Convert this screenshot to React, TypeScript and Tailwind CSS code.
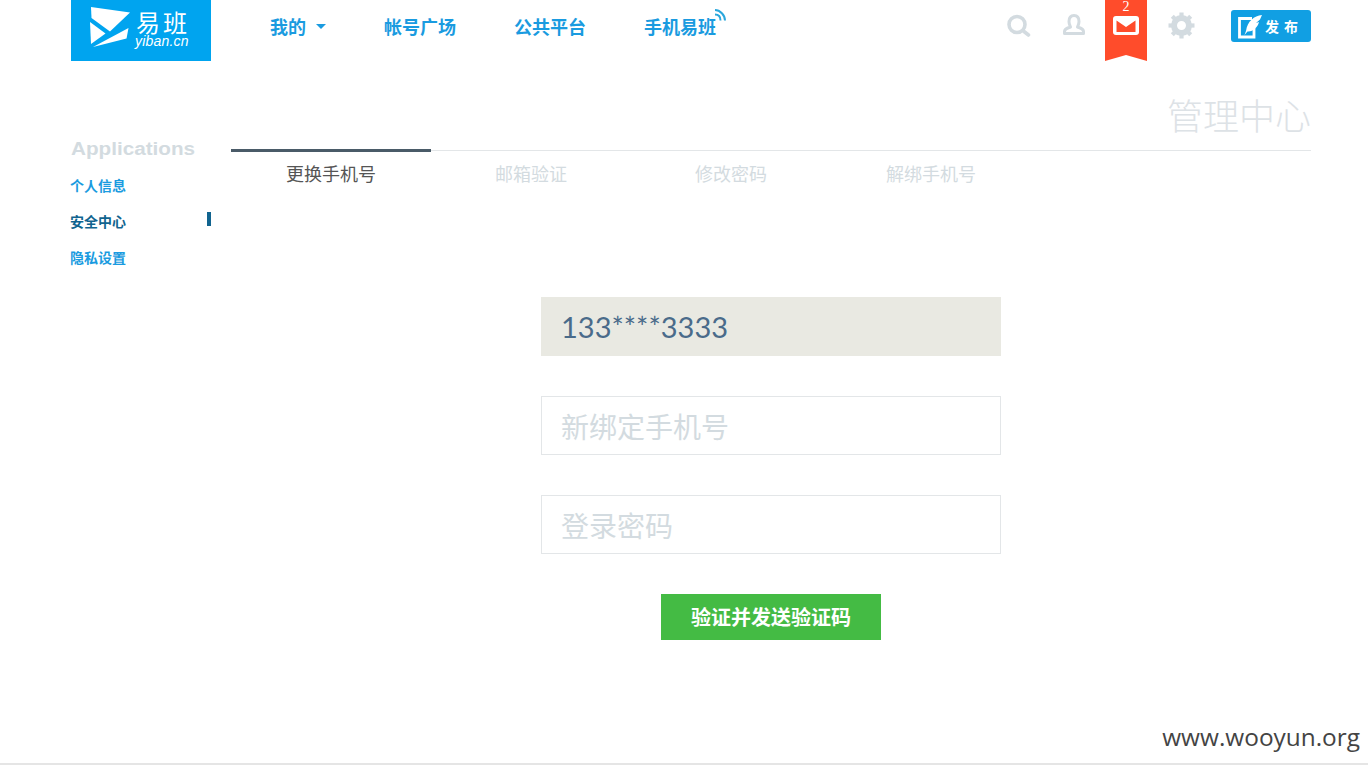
import React from "react";

const cjk = '"Noto Sans CJK SC", "Liberation Sans", sans-serif';

function Logo() {
  return (
    <div className="relative h-[61px] w-[140px] shrink-0 bg-[#00a4ef] text-white">
      <svg className="absolute left-0 top-0" width="64" height="61" viewBox="0 0 64 61" fill="#fff">
        <path d="M20 7 L59 12.5 L39 31.5 L20.5 18 Z" />
        <path d="M19 22 L34.5 33.5 L20 44 Z" />
        <path d="M22 47 L57.5 28 L55.5 38.5 Z" />
      </svg>
      <span className="absolute left-[65px] top-[10px] text-[24px] tracking-[3px] leading-[24px]" style={{ fontFamily: cjk }}>
        易班
      </span>
      <span className="absolute left-[64px] top-[34px] text-[14px] italic leading-[14px] tracking-[0.2px] font-['Liberation_Sans']">
        yiban.cn
      </span>
    </div>
  );
}

function Header() {
  return (
    <header className="flex h-[61px] items-start pl-[71px] pr-[57px]">
      <Logo />
      <nav className="ml-[59px] flex h-[52px] items-center gap-[58px] text-[18px] font-bold text-[#1a9be0]">
        <div className="flex items-center">
          <span>我的</span>
          <svg className="ml-[10px]" width="10" height="5" viewBox="0 0 10 5" fill="#1a9be0">
            <path d="M0 0 H10 L5 5 Z" />
          </svg>
        </div>
        <span>帐号广场</span>
        <span>公共平台</span>
        <div className="relative">
          <span>手机易班</span>
          <svg className="absolute -right-[10px] -top-[4px]" width="12" height="12" viewBox="0 0 12 12" fill="none" stroke="#2aa7dc" strokeWidth="2">
            <path d="M1 1 C6 1 11 6 11 11.5" />
            <path d="M1 5.5 C4.5 5.5 6.5 8 6.5 11.5" />
          </svg>
        </div>
      </nav>
      <div className="ml-auto flex items-start">
        <svg className="mt-[14px]" width="24" height="23" viewBox="0 0 24 23" fill="none" stroke="#d3dbe0">
          <circle cx="10" cy="10.5" r="8" strokeWidth="3.6" />
          <path d="M17 17.5 L21.5 21" strokeWidth="3.6" strokeLinecap="round" />
        </svg>
        <svg className="ml-[32px] mt-[14px]" width="22" height="21" viewBox="0 0 22 21" fill="none" stroke="#d3dbe0" strokeWidth="3">
          <path d="M11 1.5 C15 1.5 16 4.5 16 7.5 C16 10 15 11.5 14.5 13 C17 14 20.5 14.5 20.5 17.5 V19.5 H1.5 V17.5 C1.5 14.5 5 14 7.5 13 C7 11.5 6 10 6 7.5 C6 4.5 7 1.5 11 1.5 Z" strokeLinejoin="round" />
        </svg>
        <div className="relative ml-[20px] flex h-[61px] w-[42px] flex-col items-center bg-[#ff4c2b] text-white [clip-path:polygon(0_0,100%_0,100%_100%,50%_90%,0_100%)]">
          <span className="h-[16px] text-[14px] leading-[14px] font-['Liberation_Serif']">2</span>
          <svg width="26" height="19" viewBox="0 0 26 19">
            <rect x="0" y="0" width="26" height="19" rx="3" fill="#fff" />
            <path d="M3.5 4.5 L13 11 L22.5 4.5 V16 H3.5 Z" fill="#ff4c2b" />
          </svg>
        </div>
        <svg className="ml-[21px] mt-[12px]" width="27" height="27" viewBox="0 0 27 27" fill="none">
          <circle cx="13.5" cy="13.5" r="7.5" stroke="#d3dbe0" strokeWidth="6" />
          <g stroke="#d3dbe0" strokeWidth="4.2">
            <path d="M13.5 0.5 V5" />
            <path d="M13.5 22 V26.5" />
            <path d="M0.5 13.5 H5" />
            <path d="M22 13.5 H26.5" />
            <path d="M4.3 4.3 L7.5 7.5" />
            <path d="M19.5 19.5 L22.7 22.7" />
            <path d="M4.3 22.7 L7.5 19.5" />
            <path d="M19.5 7.5 L22.7 4.3" />
          </g>
        </svg>
        <div className="ml-[36px] mt-[10px] flex h-[32px] w-[80px] items-center rounded-[3px] bg-[#119fe3] pl-[7px] text-white">
          <svg width="24" height="26" viewBox="0 0 24 26" fill="none">
            <path d="M14 5.5 H1.5 V24 H16 V15" stroke="#fff" strokeWidth="2.8" />
            <path d="M24 2 C16 3 9.5 8 8 18 L6.5 22 L9.5 18.5 C15 19 20 14 21 9 L18 10 L22 6.5 Z" fill="#fff" />
          </svg>
          <span className="ml-[3px] text-[14px] font-bold tracking-[5px] leading-none" style={{ fontFamily: cjk }}>发布</span>
        </div>
      </div>
    </header>
  );
}

function Sidebar() {
  const items = [
    { t: "个人信息", c: "text-[#1a9be0]" },
    { t: "安全中心", c: "text-[#11648f]", active: true },
    { t: "隐私设置", c: "text-[#1a9be0]" },
  ];
  return (
    <aside className="w-[140px] shrink-0 pt-[76px]">
      <div className="h-[25px] origin-left scale-x-[1.148] text-[18px] font-bold leading-[25px] text-[#d3dbe0] font-['Liberation_Sans']">
        Applications
      </div>
      <ul className="mt-[5px] flex flex-col text-[14px] font-bold">
        {items.map((i) => (
          <li key={i.t} className={`relative flex h-[36px] items-center ${i.c}`}>
            <span className="-ml-[1px]">{i.t}</span>
            {i.active && <span className="absolute right-0 top-[9px] h-[14px] w-[4px] bg-[#11648f]" />}
          </li>
        ))}
      </ul>
    </aside>
  );
}

function Tabs() {
  const tabs = ["更换手机号", "邮箱验证", "修改密码", "解绑手机号"];
  return (
    <div className="flex border-t border-[#e3e6e8]">
      {tabs.map((t, i) => (
        <div
          key={t}
          className={`-mt-[2px] flex h-[48px] w-[200px] justify-center border-t-[3px] pt-[8px] text-[18px] leading-[26px] ${
            i === 0 ? "border-[#4a5b68] text-[#555]" : "border-transparent text-[#d3dbe0]"
          }`}
        >
          {t}
        </div>
      ))}
    </div>
  );
}

function Form() {
  const base =
    "block h-[59px] w-[460px] text-[28px] outline-none placeholder:text-[#d3dbe0]";
  return (
    <form className="mt-[100px] flex flex-col items-center gap-[40px]">
      <input
        readOnly
        value="133****3333"
        className={`${base} bg-[#e9e9e2] pl-[20px] pb-[1px] text-[29px] text-[#4a6b8a]`}
        style={{ fontFamily: "Lato, sans-serif" }}
      />
      <input placeholder="新绑定手机号" className={`${base} border border-[#e3e6e8] pl-[19px]`} />
      <input placeholder="登录密码" className={`${base} border border-[#e3e6e8] pl-[19px]`} />
      <button type="button" className="h-[46px] w-[220px] bg-[#44bb44] text-[20px] font-bold text-white">
        验证并发送验证码
      </button>
    </form>
  );
}

export default function App() {
  return (
    <div className="relative flex h-[767px] w-[1368px] flex-col overflow-hidden bg-white" style={{ fontFamily: cjk }}>
      <Header />
      <div className="flex flex-1 gap-[20px] pl-[71px] pr-[57px]">
        <Sidebar />
        <main className="flex-1">
          <h1 className="h-[89px] pt-[30px] text-right text-[36px] font-light leading-[46px] text-[#dde2e6]" style={{ fontFamily: '"Noto Sans CJK SC", sans-serif' }}>
            管理中心
          </h1>
          <Tabs />
          <Form />
        </main>
      </div>
      <div className="mb-[2px] h-[2px] bg-[#e5e5e5]" />
      <span className="absolute right-[8px] top-[720px] text-[24.4px] leading-[34px] text-[#444] font-['Open_Sans']">
        www.wooyun.org
      </span>
    </div>
  );
}
